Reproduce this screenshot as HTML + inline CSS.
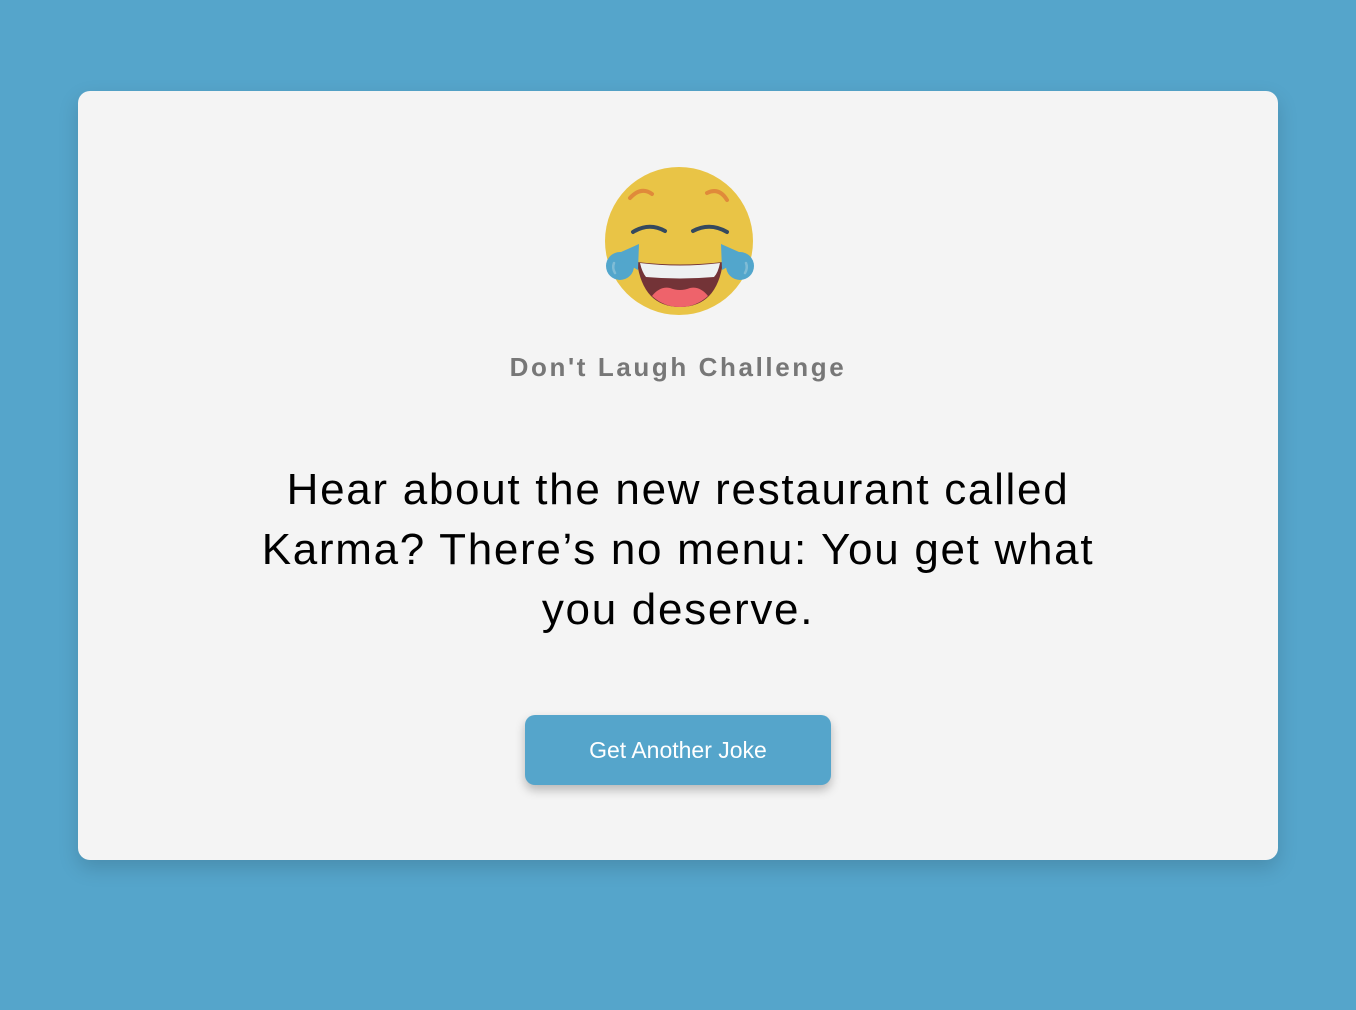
<!DOCTYPE html>
<html><head><meta charset="utf-8"><style>
html,body{margin:0;padding:0;width:1356px;height:1010px;background:#55a5cb;overflow:hidden;font-family:"Liberation Sans",sans-serif}
.card{position:absolute;left:78px;top:91px;width:1200px;height:769px;background:#f4f4f4;border-radius:12px;box-shadow:0 8px 20px rgba(0,0,0,.15)}
svg{position:absolute;left:526px;top:75px}
.title{position:absolute;left:0;right:0;top:261px;text-align:center;font-size:26px;font-weight:bold;letter-spacing:2.6px;color:#777}
.joke{position:absolute;left:150px;right:150px;top:369px;text-align:center;font-size:44px;line-height:60px;color:#000;letter-spacing:1.7px}
.btn{position:absolute;left:447px;top:624px;width:306px;height:70px;background:#55a5cb;border-radius:10px;color:#fff;font-size:23px;line-height:70px;text-align:center;box-shadow:0 5px 10px rgba(0,0,0,.25)}
</style></head><body>
<div class="card">
<svg width="150" height="150" viewBox="0 0 150 150">
<circle cx="75" cy="75" r="74" fill="#e9c446"/>
<path d="M26,32 Q37,20 48,28" stroke="#e08a3a" stroke-width="4" fill="none" stroke-linecap="round"/>
<path d="M103,27 Q115,21 123,34" stroke="#e08a3a" stroke-width="4" fill="none" stroke-linecap="round"/>
<path d="M29,66 Q45,56 61,65" stroke="#35495e" stroke-width="4" fill="none" stroke-linecap="round"/>
<path d="M89,65 Q106,56 123,66" stroke="#35495e" stroke-width="4" fill="none" stroke-linecap="round"/>
<path d="M33,96 Q76,101 119,96 Q113,141 76,141 Q39,141 33,96Z" fill="#733337"/>
<path d="M36,97 Q76,102 116,97 Q114,107 110,111 Q76,114 42,111 Q38,106 36,97Z" fill="#eef1f2"/>
<path d="M48,130 Q56,120 66,122 Q76,126 86,122 Q96,120 104,130 Q92,141 76,141 Q60,141 48,130Z" fill="#ee636b"/>
<circle cx="16" cy="100" r="14" fill="#52a6cc"/>
<path d="M35,78 L34,104 L8,90 Z" fill="#52a6cc"/>
<circle cx="136" cy="100" r="14" fill="#52a6cc"/>
<path d="M117,78 L118,104 L144,90 Z" fill="#52a6cc"/>
<path d="M10,97 Q8,102 11,107" stroke="#7fbcd6" stroke-width="2.5" fill="none" stroke-linecap="round"/>
<path d="M142,97 Q144,102 141,107" stroke="#7fbcd6" stroke-width="2.5" fill="none" stroke-linecap="round"/>
</svg>
<div class="title">Don't Laugh Challenge</div>
<div class="joke">Hear about the new restaurant called Karma? There’s no menu: You get what you deserve.</div>
<div class="btn">Get Another Joke</div>
</div>
</body></html>
